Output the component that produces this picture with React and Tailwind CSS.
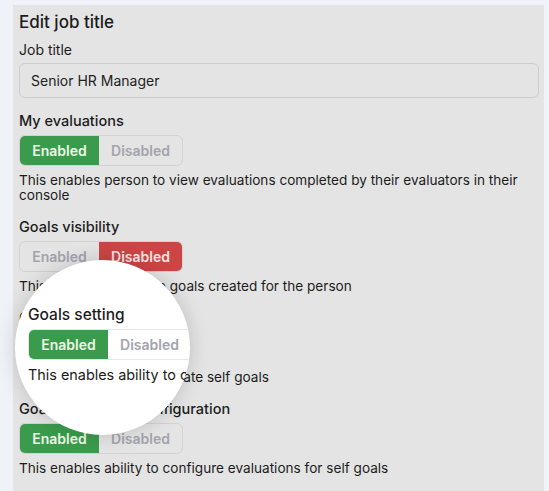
import React from 'react';

const FONT = { fontFamily: "Inter, 'Noto Sans', sans-serif" };

const SECTIONS = [
  { label: 'My evaluations', on: true, desc: 'This enables person to view evaluations completed by their evaluators in their console' },
  { label: 'Goals visibility', on: false, desc: 'This enables access to goals created for the person' },
  { label: 'Goals setting', on: true, desc: 'This enables ability to create self goals' },
  { label: 'Goals evaluation configuration', on: true, desc: 'This enables ability to configure evaluations for self goals' },
];

function Toggle({ on, light }) {
  const border = light ? 'border-[#e6e6e6]' : 'border-[#d2d2d2]';
  return (
    <div className={`mt-[4px] flex h-[31px] w-fit rounded-[6px] border ${border} overflow-hidden text-[14px] font-semibold`}>
      <div className={`flex w-[79px] items-center justify-center ${on ? 'bg-[#3b9b4c] text-[#eef7e6]' : 'text-[#a3a3ad]'}`}>
        Enabled
      </div>
      <div className={`flex w-[83px] items-center justify-center ${!on ? 'bg-[#cc4545] text-[#f8e4e4]' : 'text-[#a3a3ad]'}`}>
        Disabled
      </div>
    </div>
  );
}

function Section({ label, on, desc, light }) {
  return (
    <div className="mb-[14px]">
      <div className={`${light ? 'text-[15.5px]' : 'text-[14.5px]'} leading-[20px] font-medium text-[#1c1c1c]`}>{label}</div>
      <Toggle on={on} light={light} />
      <p className={`mt-[7px] ${light ? 'text-[14.4px]' : 'text-[13.6px]'} leading-[15px] text-[#1c1c1c]`}>{desc}</p>
    </div>
  );
}

export default function App() {
  return (
    <div className="min-h-screen bg-[#eff2f9] pl-[13px] pr-[5px] pt-[5px] pb-[5px]" style={FONT}>
      <div className="relative bg-[#e4e4e4] pl-[6px] pr-[5px] pt-[5px] pb-[10px]">
        <h1 className="text-[17px] leading-[24px] font-medium text-[#1c1c1c]">Edit job title</h1>
        <div className="mt-[6px] text-[14px] leading-[20px] text-[#1c1c1c]">Job title</div>
        <div className="mt-[3px] flex h-[35px] items-center rounded-[6px] border border-[#cdcdcd] pl-[11px] text-[14px] text-[#222]">
          Senior HR Manager
        </div>
        <div className="mt-[13px]">
          {SECTIONS.map((s) => (
            <Section key={s.label} {...s} />
          ))}
        </div>

        {/* spotlight over "Goals setting" */}
        <div className="absolute left-[2px] top-[255px] h-[175px] w-[175px] overflow-hidden rounded-full bg-white shadow-[0_0_20px_rgba(0,0,0,0.16)]">
          <div className="absolute left-[13px] top-[45px] w-[400px]">
            <Section {...SECTIONS[2]} light />
          </div>
        </div>
      </div>
    </div>
  );
}
